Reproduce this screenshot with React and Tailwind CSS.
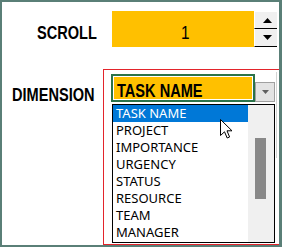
import React from 'react';

const SANS = { fontFamily: '"Liberation Sans", Arial, sans-serif' };

const items = ['TASK NAME', 'PROJECT', 'IMPORTANCE', 'URGENCY', 'STATUS', 'RESOURCE', 'TEAM', 'MANAGER'];

// the sheet uses a condensed bold face; squeeze Liberation Sans to match
function Narrow({ children, className = '' }) {
  return (
    <span className={`inline-block whitespace-nowrap origin-left scale-x-[0.81] ${className}`} style={SANS}>
      {children}
    </span>
  );
}

function Arrow({ up }) {
  return (
    <svg width="9" height="5" viewBox="0 0 9 5">
      <polygon points={up ? '4.5,0 9,5 0,5' : '0,0 9,0 4.5,5'} fill="#000" />
    </svg>
  );
}

function Cursor() {
  return (
    <svg width="13" height="20" viewBox="0 0 13 20">
      <path
        d="M0.5 0.5 L0.5 16.5 L4.5 12.8 L7.2 19 L9.6 18 L7 11.8 L12 11.8 Z"
        fill="#fff"
        stroke="#000"
        strokeWidth="1"
      />
    </svg>
  );
}

export default function App() {
  return (
    <div className="w-[282px] h-[247px] bg-[#5a7f77] pl-[2px] pt-[2px] pr-[3px] pb-[2px]">
      <div className="relative h-full bg-white flex flex-col">
        {/* scroll row */}
        <div className="flex mt-[9px] h-[36px]">
          <div className="w-[110px] pl-[35px] pt-[12px] text-[18px] leading-[18px] font-bold text-black">
            <Narrow>SCROLL</Narrow>
          </div>
          <div className="w-[142px] bg-[#ffc000] flex items-start justify-center pt-[12px] pl-[6px] text-[19px] leading-[19px] text-black">
            <Narrow>1</Narrow>
          </div>
          <div className="w-[23px] flex flex-col">
            <div className="h-[18px] bg-[#f0f0f0] border-t border-l border-white border-b border-b-black flex items-center justify-center pl-[2px]">
              <Arrow up />
            </div>
            <div className="h-[18px] bg-[#f0f0f0] border-l border-white border-b border-b-black flex items-center justify-center pl-[2px]">
              <Arrow />
            </div>
          </div>
        </div>

        {/* dimension row */}
        <div className="flex flex-1 mt-[22px]">
          <div className="w-[101px] pl-[10px] pt-[16px] text-[18px] leading-[18px] font-bold text-black">
            <Narrow>DIMENSION</Narrow>
          </div>
          <div className="flex-1 border-l border-t border-b border-[#e3242b] pl-[7px] pt-[4px]">
            <div className="relative flex items-end">
              <div className="w-[144px] h-[28px] border-2 border-[#2b7349] p-[1px] bg-white">
                <div className="h-full bg-[#ffc000] pl-[3px] pt-[4px] text-[18px] leading-[18px] font-bold text-black">
                  <Narrow>TASK NAME</Narrow>
                </div>
              </div>
              <div className="w-[20px] h-[20px] border border-[#a0a0a0] bg-[#e3e3e3] flex items-center justify-center">
                <svg width="7" height="4" viewBox="0 0 7 4">
                  <polygon points="0,0 7,0 3.5,4" fill="#5f5f5f" />
                </svg>
              </div>

              {/* open list */}
              <div className="absolute left-[1px] top-[30px] w-[163px] h-[139px] border border-black bg-white flex z-10">
                <div className="flex-1 flex flex-col">
                  {items.map((t, i) => (
                    <div
                      key={t}
                      className={`h-[17px] pl-[3px] text-[13px] leading-[17px] ${i === 0 ? 'bg-[#0078d7] text-white' : 'text-black'}`}
                      style={{ fontFamily: '"Noto Sans", "Open Sans", sans-serif' }}
                    >
                      {t}
                    </div>
                  ))}
                </div>
                <div className="w-[26px] bg-[#f0f0f0] pl-[7px] pt-[33px]">
                  <div className="w-[11px] h-[61px] bg-[#888888]" />
                </div>
              </div>
            </div>
          </div>
        </div>

        {/* sheet gridline peeking out at right */}
        <div className="absolute left-[274px] top-[70px] w-px h-[86px] bg-[#d4d4d4]" />

        {/* mouse pointer */}
        <div className="absolute left-[218px] top-[117px] z-20">
          <Cursor />
        </div>
      </div>
    </div>
  );
}
